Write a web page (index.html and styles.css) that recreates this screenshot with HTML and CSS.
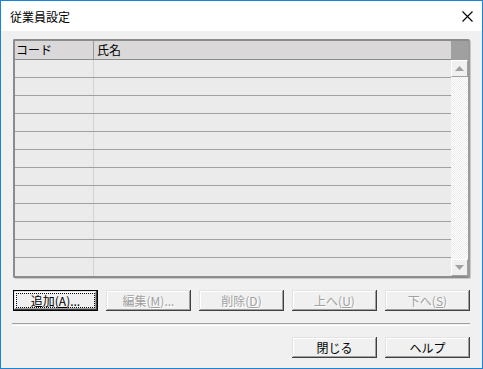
FILE: index.html
```html
<!DOCTYPE html>
<html lang="ja">
<head>
<meta charset="utf-8">
<title>従業員設定</title>
<link rel="stylesheet" href="styles.css">
</head>
<body>
<div class="window">
  <div class="titlebar">
    <span class="title">従業員設定</span>
    <span class="close"><svg width="11" height="11" viewBox="0 0 11 11"><path d="M0.5 0.5 L10.5 10.5 M10.5 0.5 L0.5 10.5" stroke="#000" stroke-width="1.1" fill="none"/></svg></span>
  </div>
  <div class="content">
    <div class="listview">
      <div class="grid">
        <div class="header">
          <div class="hcell c1">コード</div>
          <div class="hcell c2">氏名</div>
        </div>
        <div class="rows">
          <div class="row"><div class="cell c1"></div><div class="cell c2"></div></div>
          <div class="row"><div class="cell c1"></div><div class="cell c2"></div></div>
          <div class="row"><div class="cell c1"></div><div class="cell c2"></div></div>
          <div class="row"><div class="cell c1"></div><div class="cell c2"></div></div>
          <div class="row"><div class="cell c1"></div><div class="cell c2"></div></div>
          <div class="row"><div class="cell c1"></div><div class="cell c2"></div></div>
          <div class="row"><div class="cell c1"></div><div class="cell c2"></div></div>
          <div class="row"><div class="cell c1"></div><div class="cell c2"></div></div>
          <div class="row"><div class="cell c1"></div><div class="cell c2"></div></div>
          <div class="row"><div class="cell c1"></div><div class="cell c2"></div></div>
          <div class="row"><div class="cell c1"></div><div class="cell c2"></div></div>
          <div class="row last"><div class="cell c1"></div><div class="cell c2"></div></div>
        </div>
      </div>
      <div class="scrollbar">
        <div class="sb-head"></div>
        <div class="sb-btn"><svg width="9" height="5" viewBox="0 0 9 5"><path d="M4.5 0 L9 5 L0 5 Z" fill="#a0a0a0"/></svg></div>
        <div class="sb-track"></div>
        <div class="sb-btn"><svg width="9" height="5" viewBox="0 0 9 5"><path d="M0 0 L9 0 L4.5 5 Z" fill="#a0a0a0"/></svg></div>
      </div>
    </div>
    <div class="btnrow">
      <button class="btn default"><span class="focus">追加(<u>A</u>)...</span></button>
      <button class="btn disabled">編集(<u>M</u>)...</button>
      <button class="btn disabled">削除(<u>D</u>)</button>
      <button class="btn disabled">上へ(<u>U</u>)</button>
      <button class="btn disabled">下へ(<u>S</u>)</button>
    </div>
    <div class="separator"></div>
    <div class="footer">
      <button class="btn">閉じる</button>
      <button class="btn">ヘルプ</button>
    </div>
  </div>
</div>
</body>
</html>
```

FILE: styles.css
```css
html, body {
  margin: 0;
  padding: 0;
  background: #f0f0f0;
}
.window {
  width: 483px;
  height: 369px;
  box-sizing: border-box;
  border: 1px solid #1883d7;
  background: #f0f0f0;
  display: flex;
  flex-direction: column;
  font-family: "Noto Sans CJK JP", "Noto Sans", sans-serif;
  font-size: 12px;
  color: #000;
}
.titlebar {
  height: 30px;
  background: #fff;
  display: flex;
  align-items: center;
  justify-content: space-between;
  padding-left: 9px;
  padding-right: 9px;
}
.title {
  font-size: 12px;
  line-height: 14px;
  margin-top: 1px;
}
.close {
  display: flex;
  width: 11px;
  height: 11px;
  margin-top: 1px;
}
.content {
  flex: 1;
  padding: 8px 12px 0 12px;
  display: flex;
  flex-direction: column;
}
.listview {
  height: 239px;
  box-sizing: border-box;
  border-style: solid;
  border-width: 2px;
  border-color: #8c8c8c #9a9a9a #8c8c8c #8c8c8c;
  border-radius: 2px;
  display: flex;
  background: #ebebeb;
  box-shadow: 1px 1px 0 #c8c8c8;
}
.grid {
  flex: 1;
  display: flex;
  flex-direction: column;
}
.header {
  height: 19px;
  display: flex;
  background: #dad8d8;
  border-bottom: 1px solid #8c8c8c;
  box-sizing: border-box;
}
.hcell {
  line-height: 18px;
  padding-left: 1px;
  box-sizing: border-box;
}
.c1 {
  width: 79px;
  border-right: 1px solid #9a9a9a;
  box-sizing: border-box;
}
.hcell.c2 {
  padding-left: 3px;
}
.rows {
  flex: 1;
  display: flex;
  flex-direction: column;
}
.row {
  height: 18px;
  display: flex;
  border-bottom: 1px solid #a0a0a0;
  box-sizing: border-box;
}
.row.last {
  border-bottom: none;
  flex: 1;
}
.cell.c1 {
  border-right: 1px solid #d2d2d2;
}
.scrollbar {
  width: 17px;
  display: flex;
  flex-direction: column;
}
.sb-head {
  height: 19px;
  background: #a0a0a0;
}
.sb-btn {
  height: 17px;
  box-sizing: border-box;
  background: #f0f0f0;
  border: 1px solid;
  border-color: #fff #a0a0a0 #a0a0a0 #fff;
  display: flex;
  align-items: center;
  justify-content: center;
}
.sb-track {
  flex: 1;
  background: repeating-conic-gradient(#ffffff 0 25%, #ececec 0 50%) 0 0 / 2px 2px;
}
.btnrow {
  margin-top: 12px;
  display: flex;
  justify-content: space-between;
}
.btn {
  width: 85px;
  height: 21px;
  padding: 0;
  margin: 0;
  font-family: "Noto Sans CJK JP", "Noto Sans", sans-serif;
  font-size: 12px;
  line-height: 14px;
  color: #000;
  background: #f0f0f0;
  border: none;
  box-shadow: inset -1px -1px #404040, inset 1px 1px #e3e3e3, inset -2px -2px #a0a0a0, inset 2px 2px #fff;
  display: flex;
  align-items: center;
  justify-content: center;
}
.btn u {
  text-decoration: underline;
  text-underline-offset: 1px;
}
.btn.default {
  box-shadow: inset 0 0 0 1px #000, inset -2px -2px #404040, inset 2px 2px #e3e3e3, inset -3px -3px #a0a0a0, inset 3px 3px #fff;
}
.focus {
  display: flex;
  align-items: center;
  justify-content: center;
  width: 77px;
  height: 13px;
  outline: 1px dotted #000;
}
.btn.disabled {
  color: #a0a0a0;
  text-shadow: 1px 1px 0 #fff;
}
.separator {
  margin-top: 12px;
  margin-left: -1px;
  height: 1px;
  border-top: 1px solid #a0a0a0;
  border-bottom: 1px solid #fff;
}
.footer {
  margin-top: 11px;
  display: flex;
  justify-content: flex-end;
  gap: 8px;
}
```
